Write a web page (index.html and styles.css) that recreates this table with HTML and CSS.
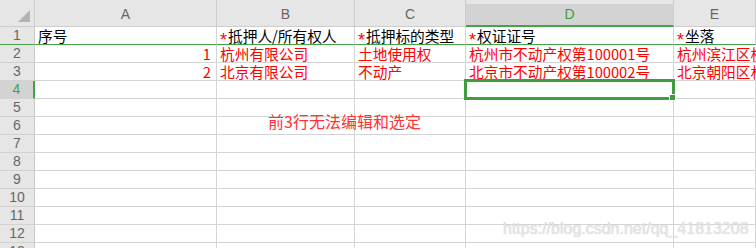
FILE: index.html
```html
<!DOCTYPE html>
<html lang="zh-CN">
<head>
    <meta charset="UTF-8">
    <title>Sheet1</title>
    <link rel="stylesheet" href="styles.css">
</head>
<body>
    <div class="sheet">
        <!-- column headers -->
        <div class="row head-row">
            <div class="corner">
                <svg width="14" height="14" viewBox="0 0 14 14"><polygon points="13,1 13,13 1,13" fill="#b4b4b4"/></svg>
            </div>
            <div class="col-head">A</div>
            <div class="col-head">B</div>
            <div class="col-head">C</div>
            <div class="col-head active">D</div>
            <div class="col-head">E</div>
        </div>

        <div class="row frozen">
            <div class="row-head">1</div>
            <div class="cell">序号</div>
            <div class="cell"><span class="req">*</span>抵押人/所有权人</div>
            <div class="cell"><span class="req">*</span>抵押标的类型</div>
            <div class="cell"><span class="req">*</span>权证证号</div>
            <div class="cell"><span class="req">*</span>坐落</div>
        </div>
        <div class="row data">
            <div class="row-head">2</div>
            <div class="cell num">1</div>
            <div class="cell">杭州有限公司</div>
            <div class="cell">土地使用权</div>
            <div class="cell">杭州市不动产权第100001号</div>
            <div class="cell">杭州滨江区杭州路</div>
        </div>
        <div class="row data">
            <div class="row-head">3</div>
            <div class="cell num">2</div>
            <div class="cell">北京有限公司</div>
            <div class="cell">不动产</div>
            <div class="cell">北京市不动产权第100002号</div>
            <div class="cell">北京朝阳区林萃路</div>
        </div>
        <div class="row">
            <div class="row-head active">4</div>
            <div class="cell"></div><div class="cell"></div><div class="cell"></div><div class="cell"></div><div class="cell"></div>
        </div>
        <div class="row">
            <div class="row-head">5</div>
            <div class="cell"></div><div class="cell"></div><div class="cell"></div><div class="cell"></div><div class="cell"></div>
        </div>
        <div class="row">
            <div class="row-head">6</div>
            <div class="cell"></div><div class="cell"></div><div class="cell"></div><div class="cell"></div><div class="cell"></div>
        </div>
        <div class="row">
            <div class="row-head">7</div>
            <div class="cell"></div><div class="cell"></div><div class="cell"></div><div class="cell"></div><div class="cell"></div>
        </div>
        <div class="row">
            <div class="row-head">8</div>
            <div class="cell"></div><div class="cell"></div><div class="cell"></div><div class="cell"></div><div class="cell"></div>
        </div>
        <div class="row">
            <div class="row-head">9</div>
            <div class="cell"></div><div class="cell"></div><div class="cell"></div><div class="cell"></div><div class="cell"></div>
        </div>
        <div class="row">
            <div class="row-head">10</div>
            <div class="cell"></div><div class="cell"></div><div class="cell"></div><div class="cell"></div><div class="cell"></div>
        </div>
        <div class="row">
            <div class="row-head">11</div>
            <div class="cell"></div><div class="cell"></div><div class="cell"></div><div class="cell"></div><div class="cell"></div>
        </div>
        <div class="row">
            <div class="row-head">12</div>
            <div class="cell"></div><div class="cell"></div><div class="cell"></div><div class="cell"></div><div class="cell"></div>
        </div>
        <div class="row">
            <div class="row-head">13</div>
            <div class="cell"></div><div class="cell"></div><div class="cell"></div><div class="cell"></div><div class="cell"></div>
        </div>

        <!-- selected cell D4 -->
        <div class="selection"></div>
        <div class="fill-handle"></div>

        <!-- floating note -->
        <div class="note">前3行无法编辑和选定</div>

        <div class="watermark">https://blog.csdn.net/qq_41813208</div>
    </div>
</body>
</html>
```

FILE: styles.css
```css
body {
    margin: 0;
    width: 756px;
    height: 248px;
    overflow: hidden;
    background-color: #fff;
    font-family: "Noto Sans CJK SC", "Liberation Sans", sans-serif;
}

.sheet {
    position: relative;
    width: 756px;
    height: 248px;
    overflow: hidden;
}

.row {
    display: grid;
    grid-template-columns: 35px 182px 138px 111px 208px 1fr;
    height: 18px;
}

.head-row {
    height: 27px;
}

/* column headers */
.corner {
    background-color: #e6e6e6;
    border-right: 1px solid #cdcdcd;
    border-bottom: 1px solid #cdcdcd;
    box-sizing: border-box;
    display: flex;
    justify-content: flex-end;
    align-items: flex-end;
    padding: 0 3px 3px 0;
}

.col-head {
    background-color: #e6e6e6;
    border-right: 1px solid #cdcdcd;
    border-bottom: 1px solid #cdcdcd;
    box-sizing: border-box;
    font-family: "Liberation Sans", sans-serif;
    font-size: 14px;
    color: #666;
    text-align: center;
    padding-top: 6px;
}

.col-head.active {
    background: linear-gradient(#e6e6e6 4px, #d3d3d3 4px);
    border-bottom: 2px solid #45a345;
    color: #3f9d3f;
}

/* row headers */
.row-head {
    background-color: #e6e6e6;
    border-right: 1px solid #c8c8c8;
    border-bottom: 1px solid #d2d2d2;
    box-sizing: border-box;
    font-family: "Liberation Sans", sans-serif;
    font-size: 14px;
    line-height: 17px;
    color: #666;
    text-align: center;
}

.row-head.active {
    background-color: #d3d3d3;
    border-right: 2px solid #45a345;
    color: #45a345;
}

/* cells */
.cell {
    border-right: 1px solid #d4d4d4;
    border-bottom: 1px solid #d4d4d4;
    box-sizing: border-box;
    padding: 0 3px;
    font-size: 14.7px;
    line-height: 17px;
    white-space: nowrap;
    overflow-x: clip;
    overflow-y: visible;
    color: #000;
}

.data .cell {
    color: #f00;
}

.cell.num {
    text-align: right;
    padding-right: 5px;
}

.req {
    font-family: "Liberation Sans", sans-serif;
    color: #f00;
    font-size: 18px;
    vertical-align: -4px;
    line-height: 0;
    margin-right: 1px;
}

/* frozen pane divider under row 1 */
.frozen .cell,
.frozen .row-head {
    border-bottom-color: #45a345;
}

.selection {
    position: absolute;
    left: 464px;
    top: 79px;
    width: 211px;
    height: 21px;
    border: 3px solid #3f9d3f;
    box-sizing: border-box;
}

.fill-handle {
    position: absolute;
    left: 669px;
    top: 94px;
    width: 5px;
    height: 5px;
    background-color: #3f9d3f;
    border: 1px solid #fff;
}

.note {
    position: absolute;
    left: 268px;
    top: 113px;
    font-size: 16px;
    line-height: 16px;
    color: #f33;
}

.watermark {
    position: absolute;
    left: 503px;
    top: 220px;
    font-family: "Liberation Sans", sans-serif;
    font-size: 16px;
    line-height: 18px;
    color: #e6e6e6;
    text-shadow: 0 0 1px #c8c8c8;
    white-space: nowrap;
}
```
